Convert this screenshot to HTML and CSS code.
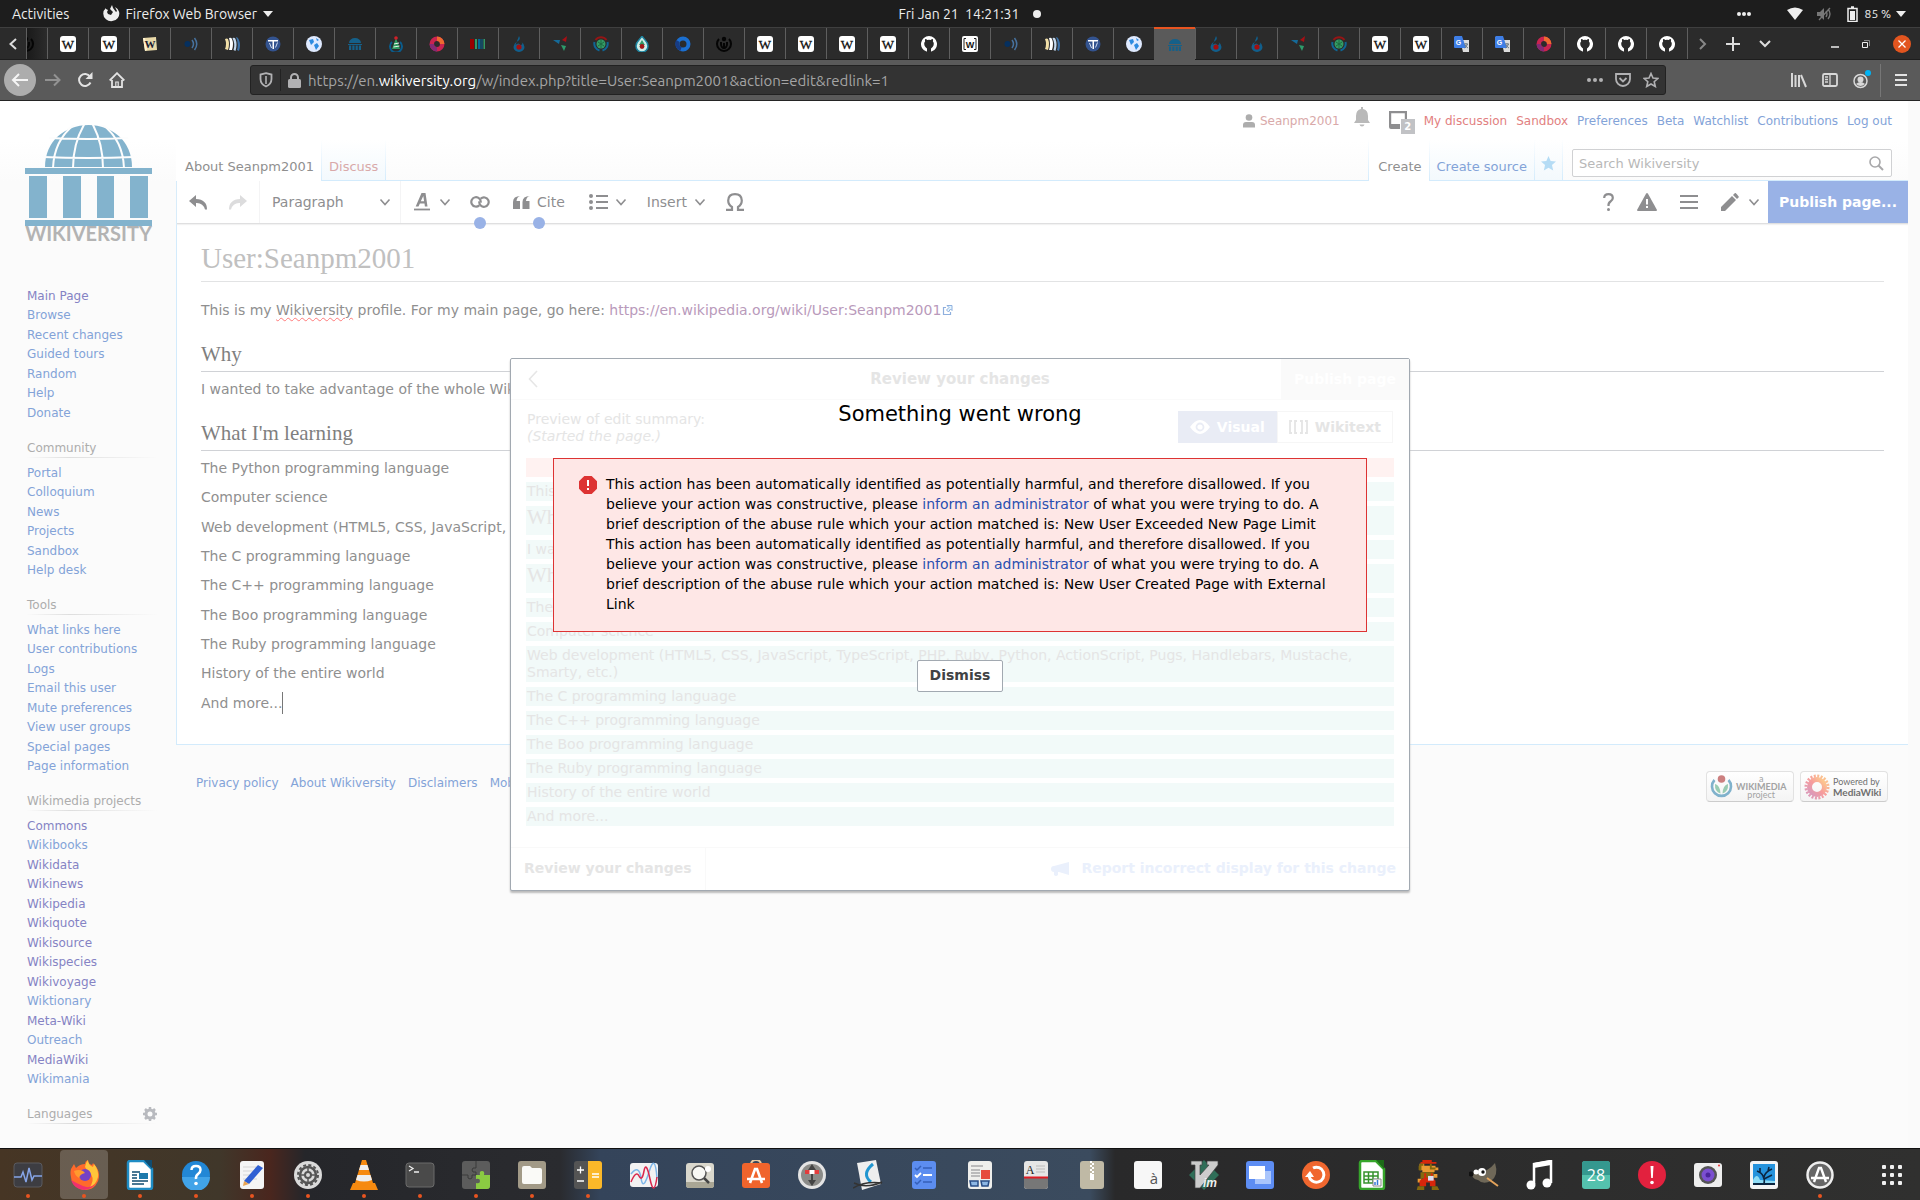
FILE: index.html
```html
<!DOCTYPE html>
<html lang="en">
<head>
<meta charset="utf-8">
<title>Creating User:Seanpm2001 - Wikiversity</title>
<link rel="stylesheet" href="styles.css">
</head>
<body>
<svg class="defs" aria-hidden="true">
  <symbol id="f-w" viewBox="0 0 16 16"><rect width="16" height="16" rx="3" fill="#fff"/><text x="8" y="12.5" font-family="Liberation Serif, serif" font-size="13" text-anchor="middle" fill="#111" stroke="#111" stroke-width=".3">W</text></symbol>
  <symbol id="f-gold" viewBox="0 0 16 16"><path d="M1 2l13-1 1 13-12 1z" fill="#e9d9a8"/><path d="M1 2l2 13 2-1L3 2z" fill="#fff3d0"/><text x="8" y="12" font-family="Liberation Serif, serif" font-weight="bold" font-size="11" text-anchor="middle" fill="#1b1b33">W</text></symbol>
  <symbol id="f-wave" viewBox="0 0 16 16"><circle cx="4.500" cy="8" r="3" fill="#06305f"/><path d="M9 4q3 4 0 8M11.500 2q4.500 6 0 12" fill="none" stroke="#47729f" stroke-width="1.500"/></symbol>
  <symbol id="f-books" viewBox="0 0 16 16"><path d="M1 3q2-1 3 0 2 5 0 11l-3-1q2-5 0-10z" fill="#f1dfa8"/><path d="M5 2q2-1 3 1 2 5 0 11l-3 0q2-6 0-12z" fill="#fff"/><path d="M8.500 2q2-1 3 1 2 5 0 12l-2-1q2-6-1-12z" fill="#c4d9ee"/><path d="M12 1q2 0 3 3 2 5 0 11l-2-1q2-6-1-13z" fill="#3e72a8"/></symbol>
  <symbol id="f-t" viewBox="0 0 16 16"><circle cx="8" cy="8" r="7.500" fill="#33538f"/><path d="M3 4h10v1.500H9v7.500H7.500V5.500H3z" fill="#fff"/><path d="M4.500 7l2 5M12.500 6.500l-2 5" stroke="#cfdcf5"/></symbol>
  <symbol id="f-globe" viewBox="0 0 16 16"><circle cx="8" cy="8" r="8" fill="#dfeaff"/><path d="M3 4l4-1 1 3-3 3zM8 9l3-2 2 3-3 4zM10 2l3 2-2 1z" fill="#2d8be0"/></symbol>
  <symbol id="f-wv" viewBox="0 0 16 16"><path d="M2 7a6 5 0 0 1 12 0zM1 8h14v1H1zM2 9.500h2.200V14H2zM5.300 9.500h2.200V14H5.300zM8.600 9.500h2.200V14H8.600zM11.800 9.500H14V14h-2.200z" fill="#156089"/></symbol>
  <symbol id="f-tree" viewBox="0 0 16 16"><path d="M4 6a6 6 0 1 0 8 0" fill="none" stroke="#0a5c8c" stroke-width="2"/><path d="M8 2l4 11H4z" fill="#2f9b61"/><path d="M6 8l5-1M5.500 11l6-1" stroke="#e8f5e8" stroke-width="1"/><circle cx="8" cy="2" r="1.800" fill="#d21f28"/></symbol>
  <symbol id="f-ring" viewBox="0 0 16 16"><circle cx="8" cy="8" r="5.200" fill="none" stroke="#ca2350" stroke-width="4.500"/><path d="M8 2.800a5.200 5.200 0 0 1 5.200 5.200" fill="none" stroke="#ee6a30" stroke-width="4.500"/><path d="M2.800 8a5.200 5.200 0 0 0 5.200 5.200" fill="none" stroke="#842a75" stroke-width="4.500"/></symbol>
  <symbol id="f-bars" viewBox="0 0 16 16"><path d="M0 3h4v10H0z" fill="#900"/><path d="M5 3h2v10H5zM13.500 3H15v10h-1.500z" fill="#396"/><path d="M8 3h2.500v10H8zM11.500 3h1v10h-1z" fill="#069"/></symbol>
  <symbol id="f-flame" viewBox="0 0 16 16"><path d="M8 0q2 3-1 5-4 2-4.500 6a5.500 5 0 0 0 11 0q0-3-3-5 2 3-1 3-2-3-5 0" fill="#115f8c"/><circle cx="8" cy="11" r="2.600" fill="#a30f0f"/></symbol>
  <symbol id="f-tri" viewBox="0 0 16 16"><path d="M1 4h7L7 8z" fill="#156a99"/><path d="M10 4l5-4-1 6z" fill="#a80f15"/><path d="M9 9l5 1-2 5z" fill="#2e9b6b"/></symbol>
  <symbol id="f-green" viewBox="0 0 16 16"><circle cx="8" cy="8" r="4.500" fill="#349b65"/><path d="M2.500 4a7 7 0 0 1 11 0" fill="none" stroke="#951515" stroke-width="2"/><path d="M1.500 6a7 7 0 0 0 5 8.500M14.500 6a7 7 0 0 1-5 8.500" fill="none" stroke="#0f6695" stroke-width="2"/><path d="M5 6l6 4M5 10l6-4M8 4v8" stroke="#1c6b40"/></symbol>
  <symbol id="f-drop" viewBox="0 0 16 16"><path d="M8 0c2 4 6 5 6 10a6 6 0 0 1-12 0c0-5 4-6 6-10z" fill="#cfeee8" stroke="#1d84a0" stroke-width="1.500"/><path d="M8 4l3 5H5z" fill="#339966"/><circle cx="8" cy="10.500" r="2.400" fill="#a31818"/></symbol>
  <symbol id="f-blue" viewBox="0 0 16 16"><circle cx="8" cy="8" r="5.500" fill="none" stroke="#1b6fd0" stroke-width="4"/><path d="M3 5a5.500 5.500 0 0 0 3 8" fill="none" stroke="#173c85" stroke-width="4"/></symbol>
  <symbol id="f-dark" viewBox="0 0 16 16"><path d="M3 3a7 7 0 1 0 10 0M5 6v2a3 4 0 0 0 6 0V6" fill="none" stroke="#050505" stroke-width="2"/><circle cx="8" cy="3" r="2.200" fill="#050505"/><path d="M8 7v6" stroke="#050505" stroke-width="2"/></symbol>
  <symbol id="f-gh" viewBox="0 0 16 16"><path fill="#fff" d="M8 0a8 8 0 0 0-2.500 15.600c.4.100.5-.2.500-.4v-2.700c-1-.9-2.800-2-2.800-4.700 0-1 .3-1.800.9-2.400-.1-.4-.3-1.300.1-2.400.9 0 1.600.5 2.100.9a7 7 0 0 1 3.400 0c.5-.4 1.200-.9 2.100-.9.4 1.100.2 2 .1 2.400.6.600.9 1.400.9 2.400 0 2.700-1.700 3.800-2.800 4.700v2.700c0 .2.100.5.500.4A8 8 0 0 0 8 0z"/></symbol>
  <symbol id="f-bw" viewBox="0 0 16 16"><rect width="16" height="16" rx="2" fill="#fff"/><path d="M4 2.500H2v11h2M12 2.500h2v11h-2" fill="none" stroke="#222"/><text x="8" y="11.500" font-family="Liberation Sans, sans-serif" font-size="9" font-weight="bold" text-anchor="middle" fill="#111">W</text></symbol>
  <symbol id="f-tr" viewBox="0 0 16 16"><path d="M6 4h9v12H9z" fill="#ddd"/><path d="M1 0h7l4 12H1a1 1 0 0 1-1-1V1z" fill="#3e7ee6"/><text x="4.500" y="9" font-family="Liberation Sans, sans-serif" font-size="7" font-weight="bold" text-anchor="middle" fill="#fff">G</text><path d="M10 8h4M12 7v1M13.500 8q-1 3-3 4M11 9q1 2 3 3" stroke="#5f6d7a" fill="none" stroke-width=".9"/></symbol>
  <symbol id="chev" viewBox="0 0 12 12"><path d="M1.500 3.500L6 8.500l4.500-5" fill="none" stroke="currentColor" stroke-width="1.600"/></symbol>
</svg>

<header class="shell">
  <div class="shell-left">
    <button>Activities</button>
    <button class="app"><svg width="17" height="18" viewBox="0 0 17 18"><path d="M3 3a8 7.500 0 1 0 9-1l2 4-1 1-3-4-1-3-2 4 3 3-2 3-3-1-1-2 1-2-2-1z" fill="#eee"/></svg>Firefox Web Browser<i class="caret"></i></button>
  </div>
  <button class="clock">Fri Jan 21&nbsp; 14:21:31<i class="dot"></i></button>
  <div class="shell-right">
    <svg width="14" height="6" viewBox="0 0 14 6"><g fill="#eee"><circle cx="2" cy="3" r="2"/><circle cx="7" cy="3" r="2"/><circle cx="12" cy="3" r="2"/></g></svg>
    <svg class="wifi" width="16" height="14" viewBox="0 0 16 14"><path d="M0 3q8-5 16 0L8 13z" fill="#eee"/></svg>
    <svg width="16" height="14" viewBox="0 0 16 14"><path d="M0 5h3l4-4v12L3 9H0z" fill="#777"/><path d="M9 4q2 3 0 6M11 2q4 5 0 10M2 13L13 1" fill="none" stroke="#777" stroke-width="1.300"/></svg>
    <svg width="11" height="16" viewBox="0 0 11 16"><path d="M1 2.500h9v13H1zM4 1h3" fill="none" stroke="#eee" stroke-width="1.500"/><path d="M3 5h5v9H3z" fill="#eee"/></svg>
    <span class="power">85 %<i class="caret"></i></span>
  </div>
</header>

<nav class="tabs" aria-label="Tabs">
  <button class="scroll-left" aria-label="Scroll tabs left"><svg width="10" height="14" viewBox="0 0 10 14"><path d="M8 2L2.500 7 8 12" fill="none" stroke="#ddd" stroke-width="2"/></svg></button>
  <button class="tab partial" aria-label="Tab"><svg><use href="#f-dark"/></svg></button>
  <button class="tab" aria-label="Tab"><svg><use href="#f-w"/></svg></button>
  <button class="tab" aria-label="Tab"><svg><use href="#f-w"/></svg></button>
  <button class="tab" aria-label="Tab"><svg><use href="#f-gold"/></svg></button>
  <button class="tab" aria-label="Tab"><svg><use href="#f-wave"/></svg></button>
  <button class="tab" aria-label="Tab"><svg><use href="#f-books"/></svg></button>
  <button class="tab" aria-label="Tab"><svg><use href="#f-t"/></svg></button>
  <button class="tab" aria-label="Tab"><svg><use href="#f-globe"/></svg></button>
  <button class="tab" aria-label="Tab"><svg><use href="#f-wv"/></svg></button>
  <button class="tab" aria-label="Tab"><svg><use href="#f-tree"/></svg></button>
  <button class="tab" aria-label="Tab"><svg><use href="#f-ring"/></svg></button>
  <button class="tab" aria-label="Tab"><svg><use href="#f-bars"/></svg></button>
  <button class="tab" aria-label="Tab"><svg><use href="#f-flame"/></svg></button>
  <button class="tab" aria-label="Tab"><svg><use href="#f-tri"/></svg></button>
  <button class="tab" aria-label="Tab"><svg><use href="#f-green"/></svg></button>
  <button class="tab" aria-label="Tab"><svg><use href="#f-drop"/></svg></button>
  <button class="tab" aria-label="Tab"><svg><use href="#f-blue"/></svg></button>
  <button class="tab" aria-label="Tab"><svg><use href="#f-dark"/></svg></button>
  <button class="tab" aria-label="Tab"><svg><use href="#f-w"/></svg></button>
  <button class="tab" aria-label="Tab"><svg><use href="#f-w"/></svg></button>
  <button class="tab" aria-label="Tab"><svg><use href="#f-w"/></svg></button>
  <button class="tab" aria-label="Tab"><svg><use href="#f-w"/></svg></button>
  <button class="tab" aria-label="Tab"><svg><use href="#f-gh"/></svg></button>
  <button class="tab" aria-label="Tab"><svg><use href="#f-bw"/></svg></button>
  <button class="tab" aria-label="Tab"><svg><use href="#f-wave"/></svg></button>
  <button class="tab" aria-label="Tab"><svg><use href="#f-books"/></svg></button>
  <button class="tab" aria-label="Tab"><svg><use href="#f-t"/></svg></button>
  <button class="tab" aria-label="Tab"><svg><use href="#f-globe"/></svg></button>
  <button class="tab active" aria-label="Current tab"><svg><use href="#f-wv"/></svg></button>
  <button class="tab" aria-label="Tab"><svg><use href="#f-flame"/></svg></button>
  <button class="tab" aria-label="Tab"><svg><use href="#f-flame"/></svg></button>
  <button class="tab" aria-label="Tab"><svg><use href="#f-tri"/></svg></button>
  <button class="tab" aria-label="Tab"><svg><use href="#f-green"/></svg></button>
  <button class="tab" aria-label="Tab"><svg><use href="#f-w"/></svg></button>
  <button class="tab" aria-label="Tab"><svg><use href="#f-w"/></svg></button>
  <button class="tab" aria-label="Tab"><svg><use href="#f-tr"/></svg></button>
  <button class="tab" aria-label="Tab"><svg><use href="#f-tr"/></svg></button>
  <button class="tab" aria-label="Tab"><svg><use href="#f-ring"/></svg></button>
  <button class="tab" aria-label="Tab"><svg><use href="#f-gh"/></svg></button>
  <button class="tab" aria-label="Tab"><svg><use href="#f-gh"/></svg></button>
  <button class="tab" aria-label="Tab"><svg><use href="#f-gh"/></svg></button>
  <div class="tab-tools">
    <button aria-label="Scroll tabs right"><svg width="8" height="12" viewBox="0 0 8 12"><path d="M1 1l5 5-5 5" fill="none" stroke="#888" stroke-width="2"/></svg></button>
    <button aria-label="New tab"><svg width="14" height="14" viewBox="0 0 14 14"><path d="M7 0v14M0 7h14" stroke="#ddd" stroke-width="2"/></svg></button>
    <button aria-label="List all tabs"><svg width="12" height="12" viewBox="0 0 12 12"><path d="M1 3l5 5 5-5" fill="none" stroke="#ddd" stroke-width="2"/></svg></button>
  </div>
  <div class="win-tools">
    <button aria-label="Minimize"><svg width="8" height="8" viewBox="0 0 8 8"><path d="M0 7h8" stroke="#eee" stroke-width="1.500"/></svg></button>
    <button aria-label="Restore"><svg width="8" height="8" viewBox="0 0 8 8"><path d="M.500 2.500h5v5h-5z" fill="none" stroke="#eee"/><path d="M2 .500h5.500V6" fill="none" stroke="#888"/></svg></button>
    <button aria-label="Close"><svg width="18" height="18" viewBox="0 0 18 18"><circle cx="9" cy="9" r="9" fill="#e2551f"/><path d="M5.500 5.500l7 7M12.500 5.500l-7 7" stroke="#fff" stroke-width="1.300"/></svg></button>
  </div>
</nav>

<div class="navbar">
  <button class="back" aria-label="Back"><svg width="18" height="16" viewBox="0 0 18 16"><path d="M17 8H2M8 2L2 8l6 6" fill="none" stroke="#f5f5f5" stroke-width="2"/></svg></button>
  <div class="nav-tools">
    <button aria-label="Forward"><svg width="16" height="16" viewBox="0 0 16 16"><path d="M0 8h14M9 2.500L14.500 8 9 13.500" fill="none" stroke="#929292" stroke-width="2"/></svg></button>
    <button aria-label="Reload"><svg width="16" height="16" viewBox="0 0 16 16"><path d="M13.500 10.500A6 6 0 1 1 13 4.500" fill="none" stroke="#e3e3e3" stroke-width="2"/><path d="M15.500 0v7h-7z" fill="#e3e3e3"/></svg></button>
    <button aria-label="Home"><svg width="16" height="16" viewBox="0 0 16 16"><path d="M.700 8.500L8 1.200l7.300 7.300M3 8v7h10V8" fill="none" stroke="#e3e3e3" stroke-width="1.800"/><path d="M6.800 15v-5h2.400v5" fill="none" stroke="#e3e3e3" stroke-width="1.200"/></svg></button>
  </div>
  <div class="urlbar">
    <svg width="14" height="16" viewBox="0 0 14 16"><path d="M7 1.200l5.500 1.300v4.500q0 5-5.500 7.500Q1.500 12 1.500 7V2.500z" fill="none" stroke="#b1b1b3" stroke-width="1.800"/><path d="M7 4v8" stroke="#b1b1b3" stroke-width="1.600"/></svg>
    <i class="url-sep"></i>
    <svg width="13" height="15" viewBox="0 0 13 15"><rect y="6" width="13" height="9" rx="1.500" fill="#b1b1b3"/><path d="M3 7V4.500a3.500 3.500 0 0 1 7 0V7" fill="none" stroke="#b1b1b3" stroke-width="2"/></svg>
    <span class="url">https://en.<b>wikiversity.org</b>/w/index.php?title=User:Seanpm2001&amp;action=edit&amp;redlink=1</span>
    <button aria-label="Page actions"><svg width="16" height="16" viewBox="0 0 16 16"><g fill="#b1b1b3"><circle cx="2" cy="8" r="2"/><circle cx="8" cy="8" r="2"/><circle cx="14" cy="8" r="2"/></g></svg></button>
    <button aria-label="Save to Pocket"><svg width="16" height="16" viewBox="0 0 16 16"><path d="M1 2h14v5a7 7 0 0 1-14 0z" fill="none" stroke="#b1b1b3" stroke-width="1.800"/><path d="M4.500 6L8 9.500 11.500 6" fill="none" stroke="#b1b1b3" stroke-width="1.800"/></svg></button>
    <button aria-label="Bookmark this page"><svg width="16" height="16" viewBox="0 0 16 16"><path d="M8 1.500l2 4.500 4.800.5-3.600 3.200 1.100 4.800L8 12l-4.300 2.500 1.100-4.800L1.200 6.500 6 6z" fill="none" stroke="#b1b1b3" stroke-width="1.600"/></svg></button>
  </div>
  <div class="nav-right">
    <button aria-label="Library"><svg width="16" height="16" viewBox="0 0 16 16"><path d="M1 1v14M4.500 3v12M8 3v12M10 3l5 12" stroke="#d8d8d8" stroke-width="2"/></svg></button>
    <button aria-label="Sidebars"><svg width="16" height="16" viewBox="0 0 16 16"><rect x="1" y="2" width="14" height="12" rx="1.500" fill="none" stroke="#d8d8d8" stroke-width="1.800"/><path d="M8 2v12M3 5h3M3 7.500h3M3 10h3" stroke="#d8d8d8" stroke-width="1.300"/></svg></button>
    <button aria-label="Account"><svg width="18" height="20" viewBox="0 0 18 20"><circle cx="7.500" cy="11" r="6.500" fill="none" stroke="#d8d8d8" stroke-width="1.500"/><circle cx="7.500" cy="9.500" r="3" fill="#d8d8d8"/><path d="M3 14q4.500-4 9 0-4.500 4-9 0z" fill="#d8d8d8"/><circle cx="15" cy="3" r="3" fill="#00b3f4"/></svg></button>
    <i class="nav-sep"></i>
    <button aria-label="Menu"><svg width="12" height="12" viewBox="0 0 12 12"><path d="M0 1h12M0 6h12M0 11h12" stroke="#e3e3e3" stroke-width="1.800"/></svg></button>
  </div>
</div>

<div class="viewport">
  <aside class="sidebar">
    <a class="logo" href="#">
      <svg width="127" height="101" viewBox="0 0 127 101">
        <path d="M20 42C20 16 40 0 63.500 0S107 16 107 42z" fill="#83b3cd"/>
        <path d="M24 13Q63 15 103 13M18 32q45 2 91 0M50-1Q29 15 28 43M60-2Q48 18 48 43M67-2Q78 18 78 43M77-1Q98 15 99 43" fill="none" stroke="#fdfdfd" stroke-width="2"/>
        <path d="M0 43h127v6H0zM0 95h127v6H0zM4 51h18v42H4zM38 51h18v42H38zM72 51h17v42H72zM105 51h18v42h-18z" fill="#83b3cd"/>
      </svg>
      <span>WIKIVERSITY</span>
    </a>
    <ul>
      <li><a class="seen" href="#">Main Page</a></li><li><a href="#">Browse</a></li><li><a href="#">Recent changes</a></li><li><a href="#">Guided tours</a></li><li><a href="#">Random</a></li><li><a href="#">Help</a></li><li><a href="#">Donate</a></li>
    </ul>
    <h3>Community</h3>
    <ul>
      <li><a href="#">Portal</a></li><li><a href="#">Colloquium</a></li><li><a href="#">News</a></li><li><a href="#">Projects</a></li><li><a href="#">Sandbox</a></li><li><a href="#">Help desk</a></li>
    </ul>
    <h3>Tools</h3>
    <ul>
      <li><a href="#">What links here</a></li><li><a href="#">User contributions</a></li><li><a href="#">Logs</a></li><li><a href="#">Email this user</a></li><li><a href="#">Mute preferences</a></li><li><a href="#">View user groups</a></li><li><a href="#">Special pages</a></li><li><a href="#">Page information</a></li>
    </ul>
    <h3>Wikimedia projects</h3>
    <ul>
      <li><a class="seen" href="#">Commons</a></li><li><a href="#">Wikibooks</a></li><li><a class="seen" href="#">Wikidata</a></li><li><a class="seen" href="#">Wikinews</a></li><li><a class="seen" href="#">Wikipedia</a></li><li><a class="seen" href="#">Wikiquote</a></li><li><a class="seen" href="#">Wikisource</a></li><li><a class="seen" href="#">Wikispecies</a></li><li><a class="seen" href="#">Wikivoyage</a></li><li><a href="#">Wiktionary</a></li><li><a class="seen" href="#">Meta-Wiki</a></li><li><a href="#">Outreach</a></li><li><a class="seen" href="#">MediaWiki</a></li><li><a href="#">Wikimania</a></li>
    </ul>
    <h3 class="langs">Languages
      <button aria-label="Language settings"><svg width="14" height="14" viewBox="0 0 14 14"><circle cx="7" cy="7" r="4" fill="none" stroke="#b8babf" stroke-width="3"/><path d="M7 0v3M7 11v3M0 7h3M11 7h3M2 2l2 2M10 10l2 2M12 2l-2 2M4 10l-2 2" stroke="#b8babf" stroke-width="2.500"/></svg></button>
    </h3>
  </aside>

  <div class="main">
    <header class="head">
      <div class="personal">
        <a class="dimred user" href="#"><svg width="12" height="14" viewBox="0 0 12 14"><circle cx="6" cy="3.500" r="3.300" fill="#adadad"/><path d="M0 13.500V11q0-3 3-3h6q3 0 3 3v2.500z" fill="#adadad"/></svg>Seanpm2001</a>
        <button class="bell" aria-label="Alerts"><svg width="16" height="20" viewBox="0 0 16 20"><path d="M7 0h2v2q5 1 5 7v4l2 3H0l2-3V9q0-6 5-7zM5.500 17.500h5q-.5 2-2.500 2t-2.500-2z" fill="#b9b9b9"/></svg></button>
        <button class="tray" aria-label="Notices"><svg width="18" height="18" viewBox="0 0 18 18"><path d="M16.900 11V1.100H1.100V14H11" fill="none" stroke="#8e8e90" stroke-width="2.200"/><path d="M0 13h5l2 2h4v3H2q-2 0-2-2z" fill="#8e8e90"/></svg><span class="badge">2</span></button>
        <a class="red" href="#">My discussion</a><a class="red" href="#">Sandbox</a><a href="#">Preferences</a><a href="#">Beta</a><a href="#">Watchlist</a><a href="#">Contributions</a><a href="#">Log out</a>
      </div>
      <div class="views">
        <a class="view on" href="#">About Seanpm2001</a>
        <a class="view dimred" href="#">Discuss</a>
        <span class="grow"></span>
        <a class="view on edge" href="#">Create</a>
        <a class="view" href="#">Create source</a>
        <a class="view star" href="#" aria-label="Watch"><svg width="15" height="15" viewBox="0 0 16 16"><path d="M8 0l2.300 5.300 5.700.5-4.300 3.800 1.300 5.900L8 12.500 3 15.500l1.300-5.900L0 5.800l5.700-.5z" fill="#b5dcf5"/></svg></a>
        <form class="search"><input type="text" aria-label="Search" placeholder="Search Wikiversity"><button type="button" aria-label="Go"><svg width="15" height="15" viewBox="0 0 15 15"><circle cx="6" cy="6" r="5" fill="none" stroke="#a8a8aa" stroke-width="1.600"/><path d="M9.500 9.500L14 14" stroke="#a8a8aa" stroke-width="2"/></svg></button></form>
      </div>
    </header>

    <section class="content">
      <div class="toolbar">
        <button aria-label="Undo" class="t-undo"><svg width="18" height="15" viewBox="0 0 18 15"><path d="M7 0L0 6l7 6V8q7-.5 9 6.500h2Q18 4.500 7 4z" fill="#8e8e90"/></svg></button>
        <button aria-label="Redo" class="t-redo"><svg width="18" height="15" viewBox="0 0 18 15"><path d="M11 0l7 6-7 6V8Q4 7.500 2 14.500H0Q0 4.500 11 4z" fill="#dcdcdd"/></svg></button>
        <button class="t-para">Paragraph<svg class="cv"><use href="#chev"/></svg></button>
        <button class="t-gap" aria-label="Style text"><svg width="16" height="18" viewBox="0 0 16 18"><path d="M7.500 0h4l2 13.500h-2.600l-.4-3H5.900l-1.400 3H1.700zM9.300 3L6.800 8.300h3.300z" fill="#8e8e90"/><path d="M0 16.500h16" stroke="#8e8e90" stroke-width="1.800"/></svg><svg class="cv"><use href="#chev"/></svg></button>
        <button class="t-link pulse" aria-label="Link"><svg width="20" height="12" viewBox="0 0 20 12"><path d="M9.200 9.400A4.700 4.700 0 1 1 10.700 6.500M10.800 2.600A4.700 4.700 0 1 1 9.300 5.500" fill="none" stroke="#8e8e90" stroke-width="2.200"/></svg></button>
        <button class="t-cite pulse"><svg width="17" height="13" viewBox="0 0 17 13"><path d="M7.500 0Q4 .5 3.500 5H7v8H0V6Q0 0 7.500 0zM17 0q-3.500.5-4 5h3.500v8h-7V6q0-6 7.500-6z" fill="#8e8e90"/></svg>Cite</button>
        <button class="t-gap" aria-label="Structure"><svg width="19" height="16" viewBox="0 0 19 16"><g fill="#8e8e90"><circle cx="2" cy="2" r="2"/><circle cx="2" cy="8" r="2"/><circle cx="2" cy="14" r="2"/><path d="M7 1h12v2H7zM7 7h12v2H7zM7 13h12v2H7z"/></g></svg><svg class="cv near"><use href="#chev"/></svg></button>
        <button class="t-gap">Insert<svg class="cv near"><use href="#chev"/></svg></button>
        <button class="t-gap" aria-label="Special character"><svg width="18" height="18" viewBox="0 0 18 18"><path d="M0 16.800h6V14Q2.200 11.500 2.200 7.500 2.500 1.200 9 1.200t6.800 6.300q0 4-3.800 6.500v2.800h6" fill="none" stroke="#8e8e90" stroke-width="2.200"/></svg></button>
        <span class="grow"></span>
        <button class="t-help" aria-label="Help"><svg width="11" height="18" viewBox="0 0 11 18"><path d="M1.200 5q0-3.800 4.300-3.800T9.800 5Q9.800 7 7.500 8.500T5.500 13" fill="none" stroke="#8e8e90" stroke-width="2.200"/><circle cx="5.500" cy="16.500" r="1.500" fill="#8e8e90"/></svg></button>
        <button class="t-warn" aria-label="Notices"><svg width="20" height="18" viewBox="0 0 20 18"><path d="M9 .7q1-1.200 2 0l9 16.300q0 1-1 1H1q-1 0-1-1z" fill="#8e8e90"/><path d="M9 6h2v5.500H9zM9 13h2v2H9z" fill="#fff"/></svg></button>
        <button class="t-menu" aria-label="Page options"><svg width="18" height="14" viewBox="0 0 18 14"><path d="M0 1h18M0 7h18M0 13h18" stroke="#8e8e90" stroke-width="2"/></svg></button>
        <button class="t-pen" aria-label="Switch editor"><svg width="18" height="18" viewBox="0 0 18 18"><path d="M11 3l4 4L4 18H0v-4zM12 2l2-2q1-.5 4 4l-2 2z" fill="#8e8e90"/></svg><svg class="cv"><use href="#chev"/></svg></button>
        <button class="publish">Publish page...</button>
      </div>

      <article>
        <h1>User:Seanpm2001</h1>
        <p class="lead">This is my <span class="typo">Wikiversity</span> profile. For my main page, go here: <a class="ext" href="#">https://en.wikipedia.org/wiki/User:Seanpm2001<svg width="12" height="12" viewBox="0 0 12 12"><path d="M5 3.500H2.500V10.500h7V8" fill="none" stroke="#8fb0de" stroke-width="1.200"/><path d="M6 1.500h5v5L9.500 5 7.500 8 5.500 6l2.500-2.500z" fill="#e3f5ff" stroke="#8fb0de"/></svg></a></p>
        <h2>Why</h2>
        <p>I wanted to take advantage of the whole Wikimedia project.</p>
        <h2>What I'm learning</h2>
        <div class="lines">
          <p>The Python programming language</p>
          <p>Computer science</p>
          <p>Web development (HTML5, CSS, JavaScript, TypeScript, PHP, Ruby, Python, ActionScript, Pugs, Handlebars, Mustache, Smarty, etc.)</p>
          <p>The C programming language</p>
          <p>The C++ programming language</p>
          <p>The Boo programming language</p>
          <p>The Ruby programming language</p>
          <p>History of the entire world</p>
          <p><span class="cursor">And more...</span></p>
        </div>
      </article>
    </section>

    <footer class="foot">
      <nav><a href="#">Privacy policy</a><a href="#">About Wikiversity</a><a href="#">Disclaimers</a><a href="#">Mobile view</a></nav>
      <div class="powered">
        <a class="plate wm" href="#"><svg width="23" height="24" viewBox="0 0 23 24"><path d="M4.500 5a9.500 9.500 0 1 0 14 0" fill="none" stroke="#80b2cc" stroke-width="2.600"/><path d="M5 9q5 1 5.500 9.500Q4.500 17 5 9zM18 9q-5 1-5.500 9.500Q18.500 17 18 9z" fill="#99ccb2"/><circle cx="11.500" cy="4" r="3.800" fill="#cc8080"/></svg><span>a<b>WIKIMEDIA</b>project</span></a>
        <a class="plate mw" href="#"><svg width="26" height="26" viewBox="0 0 26 26"><defs><linearGradient id="sun" x1="0" y1="1" x2="1" y2="0"><stop offset="0" stop-color="#d59ac0"/><stop offset=".5" stop-color="#f79c9c"/><stop offset="1" stop-color="#fdd08c"/></linearGradient></defs><circle cx="13" cy="13" r="7.500" fill="none" stroke="url(#sun)" stroke-width="5"/><circle cx="13" cy="13" r="11" fill="none" stroke="url(#sun)" stroke-width="3" stroke-dasharray="2 1.450"/></svg><span>Powered by<b>MediaWiki</b></span></a>
      </div>
    </footer>
  </div>
  <div class="scrollbar"></div>

  <div class="dialog" role="dialog" aria-label="Review your changes">
    <div class="d-head">
      <button class="d-back" aria-label="Back"><svg width="10" height="18" viewBox="0 0 10 18"><path d="M9 1L1.500 9 9 17" fill="none" stroke="#e6e6e6" stroke-width="1.600"/></svg></button>
      <strong>Review your changes</strong>
      <button class="d-publish">Publish page</button>
    </div>
    <div class="d-body">
      <div class="d-summary">
        <p>Preview of edit summary:<br><em>(Started the page.)</em></p>
        <div class="switch">
          <button class="sel"><svg width="20" height="14" viewBox="0 0 20 14"><path d="M0 7q10-14 20 0-10 14-20 0z" fill="#fff"/><circle cx="10" cy="7" r="3.500" fill="none" stroke="#e9ecf5" stroke-width="1.800"/></svg>Visual</button>
          <button><svg width="19" height="14" viewBox="0 0 19 14"><path d="M3 1H1v12h2M8 1H6v12h2M11 1h2v12h-2M16 1h2v12h-2" fill="none" stroke="#e5e5e5" stroke-width="1.800"/></svg>Wikitext</button>
        </div>
      </div>
      <div class="diff">
        <p class="del">&nbsp;</p>
        <p>This is my Wikiversity profile.</p>
        <h4>Why</h4>
        <p>I wanted to take advantage</p>
        <h4>What I'm learning</h4>
        <p>The Python programming language</p>
        <p>Computer science</p>
        <p>Web development (HTML5, CSS, JavaScript, TypeScript, PHP, Ruby, Python, ActionScript, Pugs, Handlebars, Mustache, Smarty, etc.)</p>
        <p>The C programming language</p>
        <p>The C++ programming language</p>
        <p>The Boo programming language</p>
        <p>The Ruby programming language</p>
        <p>History of the entire world</p>
        <p>And more...</p>
      </div>
    </div>
    <div class="d-foot">
      <strong>Review your changes</strong>
      <button><svg width="19" height="14" viewBox="0 0 19 14"><path d="M18 0v13L8 10H7v3q-2 2-4 0V10Q0 10 0 7t3-3z" fill="#eaf0fc"/></svg>Report incorrect display for this change</button>
    </div>
    <div class="d-error">
      <h3>Something went wrong</h3>
      <div class="message">
        <svg width="18" height="18" viewBox="0 0 18 18"><path d="M5.300 0h7.400L18 5.300v7.400L12.700 18H5.300L0 12.700V5.300z" fill="#d33"/><path d="M8 4h2v6H8zM8 12h2v2H8z" fill="#fff"/></svg>
        <div>
          <p>This action has been automatically identified as potentially harmful, and therefore disallowed. If you believe your action was constructive, please <a href="#">inform an administrator</a> of what you were trying to do. A brief description of the abuse rule which your action matched is: New User Exceeded New Page Limit</p>
          <p>This action has been automatically identified as potentially harmful, and therefore disallowed. If you believe your action was constructive, please <a href="#">inform an administrator</a> of what you were trying to do. A brief description of the abuse rule which your action matched is: New User Created Page with External Link</p>
        </div>
      </div>
      <button class="dismiss">Dismiss</button>
    </div>
  </div>
</div>

<footer class="dock">
  <button class="run" aria-label="System monitor"><svg viewBox="0 0 30 30"><rect x="1" y="3" width="28" height="24" rx="3" fill="#3d3d42" stroke="#5a5a5f"/><path d="M1 17h7l2-5 3 10 3-14 3 12 2-4h8" fill="none" stroke="#86a5e8" stroke-width="1.500"/></svg></button>
  <button class="run focus" aria-label="Firefox"><svg viewBox="0 0 30 30"><path d="M2 9l3-5 2 4q4-4 9-4 0-3 3-4 0 4 4 5l1-2q6 6 6 12a14 14 0 0 1-28 2q-1-4 0-8z" fill="#ff6a2b"/><path d="M19 0q0 5 5 7l1-3q5 6 4 13-2 8-9 11 6-7 2-14-4-3-6-7 1-5 3-7z" fill="#ffc53a"/><path d="M2 20q3 9 13 10 8-1 11-6-5 5-12 2T2 20z" fill="#f0316d"/><circle cx="16" cy="15" r="6" fill="#7542c6"/><path d="M5 11q5-2 9 0l2 2q-5 1-6 5-4-2-5-7z" fill="#ff9a2d"/></svg></button>
  <button class="run" aria-label="Writer"><svg viewBox="0 0 30 30"><path d="M3 3a2 2 0 0 1 2-2h14l8 8v18a2 2 0 0 1-2 2H5a2 2 0 0 1-2-2z" fill="#fff" stroke="#1f8cc4" stroke-width="2.500"/><path d="M19 0h8v9z" fill="#104c70"/><path d="M7 12h8M7 15h5M7 18h5M7 21h16M7 24h12" stroke="#104c70" stroke-width="1.500"/><path d="M14 13h9v6h-9z" fill="#1d79ab"/></svg></button>
  <button class="run" aria-label="Help"><svg viewBox="0 0 30 30"><circle cx="15" cy="15" r="14" fill="#2287d6"/><path d="M1 17a14 14 0 0 0 28 0z" fill="#41a3e8"/><path d="M10.500 10q0-4 4.500-4t4.500 4q0 2-2.500 4t-2 5" fill="none" stroke="#fff" stroke-width="2.500"/><circle cx="15" cy="23.500" r="1.800" fill="#fff"/></svg></button>
  <button class="run" aria-label="Text editor"><svg viewBox="0 0 30 30"><rect x="3" y="1" width="24" height="28" rx="3" fill="#f5f5f5"/><path d="M6 7h14M6 11h14M6 15h12M6 19h14" stroke="#d5d5d5"/><path d="M21 5l5 3-14 16-5-3z" fill="#2f5fd3"/><path d="M7 21l5 3-6 2z" fill="#e9a453"/></svg></button>
  <button class="run" aria-label="Settings"><svg viewBox="0 0 30 30"><circle cx="15" cy="15" r="14" fill="#dadada"/><circle cx="15" cy="15" r="8" fill="none" stroke="#555" stroke-width="2.500"/><circle cx="15" cy="15" r="10" fill="none" stroke="#555" stroke-width="2" stroke-dasharray="3 2.240"/><circle cx="15" cy="15" r="3" fill="none" stroke="#555" stroke-width="2"/><path d="M15 8v5M15 17v5M8 15h5M17 15h5" stroke="#555" stroke-width="1.500"/></svg></button>
  <button class="run" aria-label="VLC"><svg viewBox="0 0 30 30"><path d="M4 23h22l3 7H1z" fill="#f68a10"/><path d="M13 0h4l7 23q-9 5-18 0z" fill="#f68a10"/><path d="M11.500 5h7l1.500 5h-10zM8.500 15h13l1.500 5q-8 3-16 0z" fill="#eee"/></svg></button>
  <button class="run" aria-label="Terminal"><svg viewBox="0 0 30 30"><rect x="1" y="3" width="28" height="24" rx="3" fill="#4a4a4a" stroke="#6b6b6b"/><path d="M4 6l4 2.500L4 11M9 12h5" fill="none" stroke="#eee" stroke-width="1.300"/></svg></button>
  <button class="run" aria-label="Extensions"><svg viewBox="0 0 30 30"><rect x="1" y="1" width="28" height="28" rx="3" fill="#5c5c5c"/><path d="M15 15h4q-1-4 2-4t2 4h6v11a3 3 0 0 1-3 3H15v-6q4 1 4-2t-4-2z" fill="#8acb42"/><path d="M15 1v7q-4-1-4 2t4 2v3h-4q1 4-2 4t-2-4H1" fill="none" stroke="#3a3a3a"/></svg></button>
  <button class="run" aria-label="Files"><svg viewBox="0 0 30 30"><rect x="1" y="1" width="28" height="28" rx="3" fill="#a29a87"/><path d="M5 8q0-2 2-2h6l2 2h8q2 0 2 2v12q0 2-2 2H7q-2 0-2-2z" fill="#fafaf7"/></svg></button>
  <button class="run" aria-label="Calculator"><svg viewBox="0 0 30 30"><rect x="1" y="1" width="28" height="28" rx="3" fill="#545454"/><path d="M15 1h11a3 3 0 0 1 3 3v22a3 3 0 0 1-3 3H15z" fill="#fbb829"/><path d="M4 10h7M7.500 6.500v7M4 21h7M19 14h7M19 17h7" stroke="#fff" stroke-width="1.300"/></svg></button>
  <button aria-label="Power statistics"><svg viewBox="0 0 30 30"><rect x="1" y="3" width="28" height="24" rx="3" fill="#f2f2f2"/><path d="M2 14q8-10 10 4t8-6 8 6" fill="none" stroke="#7eb6e8" stroke-width="1.500"/><path d="M2 22q5-12 8-6t5-5 6 8 7-2" fill="none" stroke="#d9274c" stroke-width="1.500"/></svg></button>
  <button aria-label="Image viewer"><svg viewBox="0 0 30 30"><rect x="1" y="3" width="28" height="25" rx="3" fill="#d9d7cc"/><path d="M1 22h28v3a3 3 0 0 1-3 3H4a3 3 0 0 1-3-3z" fill="#a9a695"/><circle cx="14" cy="13" r="7" fill="#f8f8f4" stroke="#555" stroke-width="1.500"/><path d="M19 18l5 5" stroke="#444" stroke-width="2.500"/><circle cx="23" cy="9" r="3" fill="#fff"/></svg></button>
  <button aria-label="Software"><svg viewBox="0 0 30 30"><path d="M10 5q0-5 5-5t5 5" fill="none" stroke="#e8c9a0" stroke-width="2"/><rect x="1" y="3" width="28" height="25" rx="3" fill="#f0642c"/><path d="M9 23l5-14h2l5 14M6 19h18" fill="none" stroke="#fff" stroke-width="2.600"/></svg></button>
  <button aria-label="Startup disk"><svg viewBox="0 0 30 30"><circle cx="15" cy="15" r="14" fill="#e4e4e4"/><circle cx="15" cy="15" r="11" fill="#8b8b88"/><path d="M15 4l4 6h-3v10h3l-4 6-4-6h3V10h-3z" fill="#444"/><path d="M8 10h14v4H8z" fill="#e33c3c"/><path d="M12.500 10h5v4h-5z" fill="#fff"/></svg></button>
  <button aria-label="Design"><svg viewBox="0 0 30 30"><path d="M4 3l19-3 5 24-19 6z" fill="#eee"/><path d="M20 4Q8 14 18 22" fill="none" stroke="#2196d0" stroke-width="3"/><path d="M0 28q12-7 29-5M1 23q12 6 28-1" fill="none" stroke="#333" stroke-width="1.500"/></svg></button>
  <button aria-label="To do"><svg viewBox="0 0 30 30"><rect x="3" y="1" width="24" height="28" rx="3" fill="#5c8df0"/><path d="M6 8l2 2 4-4M14 8h9M6 22l2 2 4-4M14 22h9" fill="none" stroke="#345fb8" stroke-width="1.500"/><path d="M6 15l2 2 4-4M14 15h9" fill="none" stroke="#fff" stroke-width="1.800"/></svg></button>
  <button aria-label="Document viewer"><svg viewBox="0 0 30 30"><rect x="3" y="1" width="24" height="28" rx="3" fill="#efefec"/><path d="M6 6h12M6 10h9M6 13h9M6 16h9" stroke="#aaa" stroke-width="1.500"/><path d="M16 10h9v9h-9z" fill="#e64a3c"/><path d="M5 21h8v5H6zM16 21h8l-1 5h-6z" fill="#8db7e4" stroke="#2a4d85" stroke-width="1.500"/></svg></button>
  <button aria-label="Scanner"><svg viewBox="0 0 30 30"><rect x="3" y="1" width="24" height="28" rx="3" fill="#e6e6e6"/><path d="M3 18h24v8a3 3 0 0 1-3 3H6a3 3 0 0 1-3-3z" fill="#777"/><path d="M3 17.500h24" stroke="#e01b24" stroke-width="2"/><text x="9" y="14" font-family="Liberation Serif, serif" font-size="12" text-anchor="middle" fill="#222">A</text><path d="M15 6h9M15 9h9M15 12h9" stroke="#bbb"/></svg></button>
  <button aria-label="Archive manager"><svg viewBox="0 0 30 30"><rect x="3" y="1" width="24" height="28" rx="3" fill="#bfb9a5"/><path d="M14 1v14" stroke="#fff" stroke-width="2" stroke-dasharray="2 2"/><path d="M16 3v12" stroke="#fff" stroke-width="2" stroke-dasharray="2 2"/><path d="M13 14h4v6h-4z" fill="#fff"/></svg></button>
  <button aria-label="Characters"><svg viewBox="0 0 30 30"><rect x="1" y="1" width="28" height="28" rx="3" fill="#f7f7f7"/><text x="21" y="24" font-family="Open Sans, sans-serif" font-size="15" text-anchor="middle" fill="#555">à</text></svg></button>
  <button aria-label="Vim"><svg viewBox="0 0 30 30"><path d="M15 0l15 15-15 15L0 15z" fill="#2f6e58"/><path d="M2 1h11v4h-2v10l9-10h-2V1h11v4L11 28H6V5H2z" fill="#ccc" stroke="#444" stroke-width=".7"/><text x="21" y="27" font-family="Liberation Sans, sans-serif" font-style="italic" font-weight="bold" font-size="12" text-anchor="middle" fill="#eee">im</text></svg></button>
  <button aria-label="Boxes"><svg viewBox="0 0 30 30"><rect x="1" y="1" width="28" height="28" rx="3" fill="#5d8df3"/><path d="M10 11h16v13H10z" fill="#a9c5fc"/><path d="M4 6h16v13H4z" fill="#fff"/></svg></button>
  <button aria-label="Updater"><svg viewBox="0 0 30 30"><circle cx="15" cy="15" r="14" fill="#f0672f"/><path d="M12 8a7.500 7.500 0 1 1-4 8" fill="none" stroke="#fff" stroke-width="3"/><path d="M4 17l5-6 4 6z" fill="#fff"/></svg></button>
  <button aria-label="Calc"><svg viewBox="0 0 30 30"><path d="M3 3a2 2 0 0 1 2-2h14l8 8v18a2 2 0 0 1-2 2H5a2 2 0 0 1-2-2z" fill="#fff" stroke="#36a52b" stroke-width="2.500"/><path d="M19 0h8v9z" fill="#1c6b18"/><path d="M7 12h14v11H7zM7 16h14M7 19.500h14M11.500 12v11M16 12v11" fill="none" stroke="#36922d" stroke-width="1.500"/><path d="M16 19h8v7h-8z" fill="#fff" stroke="#888"/><path d="M18 22v3M20.500 20v5" stroke="#3779d4" stroke-width="1.500"/></svg></button>
  <button aria-label="Game"><svg viewBox="0 0 24 32"><path d="M6 0h10v2h5v2H4V2h2z" fill="#d8260b"/><path d="M3 4h5v2h12v2h3v3h-4v2H6V11H3z" fill="#eb9a33"/><path d="M3 4h4v2H5v5H2V6h1zM14 4h2v4h4v2h-6zM4 13h14v7H4z" fill="#85690e"/><path d="M18 15h4v4h-4zM1 20h4v4H1z" fill="#eb9a33"/><path d="M8 14h2v5h5v-5h2v5l3 3v6h-6v-4h-4v4H3v-6l5-3z" fill="#d8260b"/><path d="M1 28h7v4H0zM16 28h6l2 4h-8z" fill="#85690e"/><path d="M12 17h6v5h-6z" fill="#dcdcf0"/></svg></button>
  <button aria-label="GIMP"><svg viewBox="0 0 30 30"><path d="M2 12q8 3 16-2 4-2 8-7 4 12-4 18-8 4-13-1-6-1-7-8z" fill="#6f6858"/><circle cx="13" cy="12" r="4" fill="#fff"/><circle cx="7" cy="12" r="2.500" fill="#fff"/><circle cx="14" cy="12" r="1.700" fill="#111"/><circle cx="2" cy="14" r="2.500" fill="#111"/><path d="M18 18l11 8" stroke="#e2a25a" stroke-width="2"/></svg></button>
  <button aria-label="Music"><svg viewBox="0 0 30 30"><path d="M9 24V4l17-3v22" fill="none" stroke="#fff" stroke-width="2.500"/><path d="M9 3l17-3v5L9 8z" fill="#fff"/><circle cx="6" cy="25" r="4.500" fill="#fff"/><circle cx="22" cy="23" r="4.500" fill="#fff"/></svg></button>
  <button aria-label="Calendar"><svg viewBox="0 0 30 30"><rect x="1" y="1" width="28" height="28" rx="3" fill="#54c1ad"/><path d="M4 1h22a3 3 0 0 1 3 3v11H1V4a3 3 0 0 1 3-3z" fill="#35988f"/><text x="15" y="21" font-family="Open Sans, sans-serif" font-size="16" text-anchor="middle" fill="#fff">28</text></svg></button>
  <button aria-label="Alert"><svg viewBox="0 0 30 30"><circle cx="15" cy="15" r="14" fill="#e2213e"/><path d="M13.500 6h3l-.7 12h-1.600z" fill="#fff"/><circle cx="15" cy="22.500" r="1.800" fill="#fff"/></svg></button>
  <button aria-label="Camera"><svg viewBox="0 0 30 30"><rect x="1" y="3" width="28" height="24" rx="3" fill="#eee"/><circle cx="15" cy="15" r="9" fill="#555"/><circle cx="15" cy="15" r="6.500" fill="#7b4fd0"/><circle cx="15" cy="15" r="2.500" fill="#4b259a"/><circle cx="26" cy="5.500" r="1" fill="#e33"/></svg></button>
  <button aria-label="Photos"><svg viewBox="0 0 30 30"><rect x="1" y="1" width="28" height="28" rx="3" fill="#f4f4f4"/><path d="M4 4h22v20H4z" fill="#2593dd"/><path d="M4 20q4-8 7 0l15 1v3H4z" fill="#8fdcf5"/><path d="M15 24q1-5-1-8-1-3-6-5M15 17q1-5 8-8M15 19l8-4M11 12l0-4M19 11l1-4" fill="none" stroke="#0c2540" stroke-width="1.600"/><path d="M4 23h22v2H4z" fill="#0c2540"/></svg></button>
  <button class="run" aria-label="Software updater"><svg viewBox="0 0 30 30"><circle cx="15" cy="15" r="12.500" fill="#666" stroke="#eee" stroke-width="2.500"/><path d="M9 22l5-14h2l5 14M6 18h18" fill="none" stroke="#fff" stroke-width="2.400"/></svg></button>
  <button class="apps" aria-label="Show applications"><svg viewBox="0 0 30 30"><g fill="#f0f0f0"><rect x="5" y="5" width="4" height="4" rx="1"/><rect x="13" y="5" width="4" height="4" rx="1"/><rect x="21" y="5" width="4" height="4" rx="1"/><rect x="5" y="13" width="4" height="4" rx="1"/><rect x="13" y="13" width="4" height="4" rx="1"/><rect x="21" y="13" width="4" height="4" rx="1"/><rect x="5" y="21" width="4" height="4" rx="1"/><rect x="13" y="21" width="4" height="4" rx="1"/><rect x="21" y="21" width="4" height="4" rx="1"/></g></svg></button>
</footer>
</body>
</html>
```

FILE: styles.css
```css
* { box-sizing: border-box; }
html, body { margin: 0; height: 100%; }
body {
  display: flex;
  flex-direction: column;
  min-height: 100vh;
  background: #fbfbfb;
  font-family: "DejaVu Sans", sans-serif;
  font-size: 14px;
  color: #8f8f8f;
}
h1, h2, h3, h4, p, ul { margin: 0; padding: 0; font-weight: normal; }
ul { list-style: none; }
a { color: #83a3d8; text-decoration: none; }
button { font: inherit; color: inherit; background: none; border: 0; padding: 0; margin: 0; display: flex; align-items: center; justify-content: center; }
svg { display: block; flex: none; }
.defs { display: none; }
.grow { flex: 1; }

/* Desktop top bar */
.shell {
  display: grid;
  grid-template-columns: 1fr auto 1fr;
  align-items: center;
  height: 27px;
  padding: 0 14px 0 12px;
  background: #1d1d1d;
  color: #eee;
  font-family: Ubuntu, "Noto Sans", sans-serif;
  font-size: 14px;
}
.shell-left, .shell-right { display: flex; align-items: center; }
.shell-left { gap: 34px; }
.shell-right { justify-content: flex-end; gap: 14px; }
.shell-right .wifi { margin-left: 22px; }
.app { gap: 5px; }
.caret { border: 5px solid transparent; border-top: 6px solid #eee; border-bottom: 0; margin-left: 1px; }
.power { display: flex; align-items: center; gap: 4px; font-size: 12px; margin-left: -7px; }
.clock { position: relative; }
.dot { position: absolute; left: 100%; margin-left: 14px; width: 8px; height: 8px; border-radius: 50%; background: #eee; }

/* Browser tabs */
.tabs { display: flex; height: 33px; background: #2b2b2b; border-top: 1px solid #3f3f3f; border-bottom: 1px solid #1d1d1d; }
.scroll-left { width: 26px; }
.tab { width: 41px; border-left: 1px solid #5f5f5f; }
.tab svg { width: 16px; height: 16px; }
.partial { width: 21px; overflow: hidden; justify-content: flex-start; background: linear-gradient(90deg, #1a1a1a, #2b2b2b); }
.partial svg { margin-left: -9px; }
.active { background: #5a5a5a; border-left: 0; border-top: 2px solid #e95420; margin: -1px 0; }
.tab-tools { display: flex; flex: 1; align-items: center; gap: 19px; padding-left: 11px; border-left: 1px solid #5f5f5f; }
.win-tools { display: flex; align-items: center; gap: 23px; padding-right: 9px; }

/* Browser navigation bar */
.navbar { display: flex; align-items: center; height: 41px; padding-left: 4px; padding-right: 13px; background: #5a5a5a; border-bottom: 1px solid #242424; }
.back { width: 32px; height: 32px; border-radius: 50%; background: #adadad; }
.nav-tools { display: flex; gap: 16px; margin-left: 9px; width: 205px; }
.urlbar { display: flex; align-items: center; flex: 1; height: 30px; padding: 0 6px 0 8px; background: #333; border: 1px solid #222; border-radius: 3px; color: #a5a5a5; font-family: Ubuntu, "Noto Sans", sans-serif; font-size: 15px; gap: 12px; }
.url-sep { width: 1px; height: 22px; background: #222; margin: 0 -5px; }
.url { flex: 1; white-space: nowrap; margin-left: -5px; }
.url b { font-weight: normal; color: #fff; }
.nav-right { display: flex; align-items: center; gap: 15px; margin-left: 125px; }
.nav-sep { width: 1px; height: 33px; background: #777; margin: 0 -6px; }
.nav-right button:last-child { margin-left: 5px; }

/* Page */
.viewport { position: relative; display: flex; flex: 1; background: linear-gradient(#fff 40px, #fbfbfb 80px, #fbfbfb); }
.scrollbar { width: 12px; background: #fafafa; }
.sidebar { width: 176px; padding: 24px 19px 0 27px; font-size: 12px; }
.logo { display: flex; flex-direction: column; align-items: center; margin: 0 5px 46px -2px; color: #b3b3b3; }
.logo span { font: bold 20px/14px Lato, sans-serif; }
.sidebar li { line-height: 19px; }
.sidebar li:nth-child(odd) { line-height: 20px; }
.sidebar li .seen { color: #8583c4; }
.sidebar h3 {
  margin: 16px 0 5px;
  font-size: 12px;
  line-height: 18px;
  color: #adadad;
  border-bottom: 1px solid;
  border-image: linear-gradient(90deg, transparent, #dedede 33%, transparent) 1;
}
.langs { display: flex; justify-content: space-between; align-items: center; }

.main { flex: 1; min-width: 0; }
.head { display: flex; flex-direction: column; justify-content: space-between; height: 79px; }
.personal { display: flex; justify-content: flex-end; align-items: center; gap: 9px; height: 39px; padding: 1px 16px 0 0; font-size: 12px; }
.red { color: #e28080; }
.dimred { color: #d9a9a9; }
.user { display: flex; align-items: center; gap: 5px; }
.bell { margin: -8px 10px 0 5px; }
.tray { position: relative; margin: -3px 8px 0 0; }
.badge { position: absolute; left: 12px; top: 8px; width: 14px; height: 15px; line-height: 15px; font-size: 10px; font-weight: bold; color: #fff; background: #c1c2c5; text-align: center; }
.views { display: flex; align-items: flex-end; font-size: 13px; }
.view {
  display: flex;
  align-items: flex-end;
  height: 40px;
  padding: 0 7px 4px;
  line-height: 18px;
  border-right: 1px solid;
  border-image: linear-gradient(#fff, #d3ebfc) 1;
  background: linear-gradient(#fff, #f3f9fd);
}
.view.on { background: #fff; margin-bottom: -1px; height: 41px; padding-bottom: 5px; color: #8f8f8f; z-index: 1; }
.view:first-child { padding-left: 9px; border-left: 0; }
.view.edge { border-left: 1px solid; padding-left: 9px; }
.view.star { padding: 0 6px 9px; }
.search { display: flex; align-items: center; width: 320px; height: 28px; margin: 0 16px 3px 9px; padding-right: 7px; border: 1px solid #d0d1d3; border-radius: 2px; background: #fff; }
.search input { flex: 1; border: 0; background: none; padding: 0 6px; font: 13px "DejaVu Sans", sans-serif; outline: 0; }
.search input::placeholder { color: #b8b8b8; opacity: 1; }

.content { border: 1px solid #d3ebfc; border-right: 0; background: #fff; }
.toolbar { display: flex; align-items: center; height: 43px; border-bottom: 1px solid #dfdfe0; box-shadow: 0 1px 1px #f2f2f2; color: #8e8e90; }
.toolbar > button { height: 42px; }
.cv { width: 12px; height: 12px; margin-left: 9px; color: #8e8e90; }
.cv.near { margin-left: 7px; }
.t-undo { margin-left: 12px; }
.t-redo { margin: 0 12px 0 22px; }
.toolbar .t-para { justify-content: space-between; width: 142px; padding: 0 9px 0 12px; border: 1px solid #f4f4f5; border-width: 0 1px; margin-right: -7px; }
.t-gap { margin-left: 20px; }
.t-link { margin-left: 19px; }
.t-cite { gap: 7px; margin: 0 4px 0 23px; }
.pulse { position: relative; }
.pulse::after { content: ""; position: absolute; left: 50%; top: 36px; width: 12px; height: 12px; margin-left: -6px; border-radius: 50%; background: #99b2e6; }
.t-help, .t-warn, .t-menu { margin-right: 23px; }
.t-pen { margin-right: 8px; }
.toolbar .publish { width: 140px; background: #99b2e6; color: #fff; font-weight: bold; }

article { padding: 16px 24px 30px; line-height: 22px; }
h1, h2, h4 { font-family: "Liberation Serif", serif; }
h1 { font-size: 29px; line-height: 36px; padding-bottom: 5px; border-bottom: 1px solid #e2e3e4; color: #c0c0c0; }
h2 { font-size: 21px; line-height: 28px; padding-bottom: 3px; margin: 19px 0 6px; border-bottom: 1px solid #d0d2d6; color: #7f7f7f; }
.lead { margin-top: 17px; }
.typo { text-decoration: underline wavy #ff7a7a 1px; text-underline-offset: 2px; }
.ext { display: inline-flex; align-items: center; color: #b99abb; }
.lines { display: flex; flex-direction: column; gap: 7px; }
.lines p:nth-child(3n + 2) { margin-bottom: 1px; }
.cursor { display: inline-block; height: 22px; border-right: 1px solid #777; }

.foot { display: flex; justify-content: space-between; padding: 26px 20px 0; font-size: 12px; line-height: 24px; }
.foot nav, .powered { display: flex; }
.foot nav { gap: 12px; }
.powered { gap: 6px; }
.plate { display: flex; align-items: center; gap: 3px; width: 88px; height: 31px; padding: 0 3px; border: 1px solid #e2e2e2; border-bottom-color: #ccc; border-radius: 4px; background: linear-gradient(#fff, #f4f4f4); font: 9px/8px Lato, sans-serif; color: #a3a3a3; }
.plate b { display: block; }
.wm span { text-align: center; }
.mw { color: #6f6f6f; line-height: 10px; }
.mw b { font-size: 10px; }

/* Review dialog */
.dialog { position: absolute; left: 50%; top: 257px; width: 900px; margin-left: -450px; border: 1px solid #a2a9b1; border-radius: 2px; background: #fff; box-shadow: 0 2px 2px #bbb; color: #e5e5e5; line-height: 17px; }
.d-head { display: flex; align-items: center; justify-content: space-between; height: 41px; border-bottom: 1px solid #fafafa; font-size: 15px; }
.d-back { width: 128px; height: 40px; justify-content: flex-start; padding-left: 17px; }
.d-publish { width: 128px; height: 40px; background: #fafafa; color: #fff; font-size: 14px; font-weight: bold; }
.d-body { padding: 11px 15px 21px; }
.d-summary { display: flex; justify-content: space-between; height: 47px; padding: 0 1px; }
.switch { display: flex; height: 32px; }
.switch button { gap: 7px; padding: 0 11px; border: 1px solid #f6f6f6; font-weight: bold; }
.switch .sel { background: #e9ecf5; border-color: #e9ecf5; color: #fff; }
.diff { display: flex; flex-direction: column; gap: 5px; }
.diff p, .diff h4 { padding: 1px; background: #f2faf9; }
.diff .del { background: #fff2f1; }
.diff h4 { font-size: 21px; line-height: 22px; padding: 0 1px 7px; }
.d-foot { display: flex; justify-content: space-between; height: 43px; border-top: 1px solid #f9f9f9; }
.d-foot strong { padding: 12px 13px 0; border-right: 1px solid #f9f9f9; }
.d-foot button { gap: 11px; height: 41px; padding-right: 13px; font-weight: bold; color: #eaf0fc; }
.d-error { position: absolute; inset: 0; display: flex; flex-direction: column; align-items: center; padding-top: 41px; color: #000; }
.d-error h3 { font-size: 21px; line-height: 28px; margin-bottom: 30px; }
.message { display: flex; align-items: flex-start; width: 814px; padding: 15px 26px 17px 25px; gap: 9px; line-height: 20px; border: 1px solid #d33; background: #fee7e6; }
.message svg { margin-top: 2px; }
.message a { color: #2a4fb0; }
.dismiss { margin-top: 28px; height: 32px; padding: 0 12px 2px; border: 1px solid #a2a9b1; border-radius: 2px; background: #fff; color: #404244; font-weight: bold; }

/* Dock */
.dock {
  display: flex;
  height: 52px;
  padding-right: 4px;
  border-top: 1px solid #111;
  background: linear-gradient(90deg, #463524, #40372a 220px, #4a261e 270px, #25262a 305px, #2a2b2f 560px, #34445a 600px, #3b4b5e 1090px, #29292a 1115px, #30302f);
}
.dock button { position: relative; width: 56px; flex: none; }
.dock svg { width: 30px; height: 30px; }
.dock .apps { margin-left: auto; width: 48px; }
.run::after { content: ""; position: absolute; bottom: 2px; left: 26px; width: 4px; height: 4px; border-radius: 50%; background: #e95420; }
.focus::before { content: ""; position: absolute; inset: 1px 4px; border-radius: 4px; background: rgba(255,255,255,.2); }
.focus svg { position: relative; }
```
